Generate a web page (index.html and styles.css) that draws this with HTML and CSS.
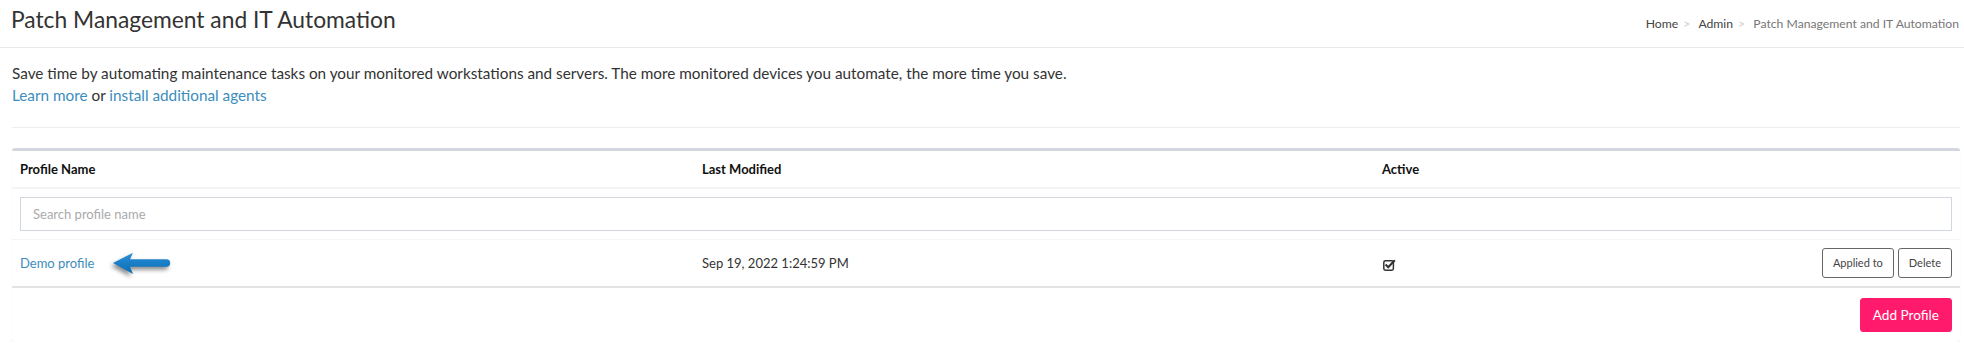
FILE: index.html
```html
<!DOCTYPE html>
<html lang="en">
<head>
<meta charset="utf-8">
<title>Patch Management and IT Automation</title>
<link rel="stylesheet" href="styles.css">
</head>
<body>
<header class="page-header">
  <h1 class="page-title">Patch Management and IT Automation</h1>
  <ol class="breadcrumb"><li class="crumb"><a href="#">Home</a></li><li class="crumb"><a href="#">Admin</a></li><li class="crumb crumb-active">Patch Management and IT Automation</li></ol>
</header>
<main class="content">
  <p class="intro">Save time by automating maintenance tasks on your monitored workstations and servers. The more monitored devices you automate, the more time you save.<br><a class="link" href="#">Learn more</a> or <a class="link" href="#">install additional agents</a></p>
  <hr class="divider">
  <section class="box">
    <table class="profiles">
      <colgroup>
        <col class="col-name">
        <col class="col-modified">
        <col class="col-active">
        <col class="col-actions">
      </colgroup>
      <thead>
        <tr>
          <th>Profile Name</th>
          <th>Last Modified</th>
          <th>Active</th>
          <th></th>
        </tr>
      </thead>
      <tbody>
        <tr>
          <td colspan="4"><input class="search" type="text" placeholder="Search profile name"></td>
        </tr>
        <tr class="data-row">
          <td><a class="link" href="#">Demo profile</a><svg class="pointer" width="64" height="30" viewBox="0 0 64 30" aria-hidden="true"><defs><linearGradient id="ag" x1="0" y1="0" x2="0" y2="1"><stop offset="0" stop-color="#2a8fd6"/><stop offset="1" stop-color="#0a6db5"/></linearGradient></defs><path d="M3 14 L23 3.7 L20 10.3 L56.5 10.3 A3.7 3.7 0 0 1 56.5 17.7 L20 17.7 L23 25 Z" fill="url(#ag)"/></svg></td>
          <td>Sep 19, 2022 1:24:59 PM</td>
          <td><svg class="check" width="13" height="12" viewBox="0 0 13 12" aria-hidden="true"><rect x="0.8" y="1.8" width="9.6" height="9.4" rx="1.6" fill="none" stroke="#333" stroke-width="1.5"/><path d="M2.6 5.6 L5.2 8.2 L11.8 1.2" fill="none" stroke="#333" stroke-width="2.1"/></svg></td>
          <td class="actions"><button class="btn btn-outline" type="button">Applied to</button><button class="btn btn-outline" type="button">Delete</button></td>
        </tr>
      </tbody>
    </table>
    <div class="box-footer">
      <button class="btn btn-primary" type="button">Add Profile</button>
    </div>
  </section>
</main>
</body>
</html>
```
FILE: styles.css
```css
* { box-sizing: border-box; }
html, body { margin: 0; padding: 0; background: #fff; }
body {
  font-family: "Lato", "Liberation Sans", sans-serif;
  font-size: 13px;
  color: #333;
}
a { text-decoration: none; }

.page-header {
  display: flex;
  align-items: baseline;
  justify-content: space-between;
  padding: 4px 5px 12px 11px;
  border-bottom: 1px solid #e9e9e9;
}
.page-title {
  margin: 0;
  font-size: 22.8px;
  line-height: 31px;
  font-weight: 400;
  color: #333;
}
.breadcrumb {
  display: block;
  margin: 0;
  padding: 0;
  list-style: none;
  font-size: 12.2px;
  line-height: 16px;
  white-space: nowrap;
}
.crumb { display: inline; }
.crumb a { color: #444; }
.crumb + .crumb::before {
  content: ">\00a0";
  padding: 0 5px;
  color: #ccc;
}
.crumb-active { color: #777; }

.content { padding: 0 4px 0 12px; }
.intro {
  margin: 14px 0 0;
  font-size: 15.3px;
  line-height: 22px;
  color: #333;
}
.link { color: #3c8dbc; }
.divider {
  margin: 21px 0 20px;
  border: 0;
  border-top: 1px solid #eee;
  height: 0;
}

.box {
  background: #fff;
  border-top: 3px solid #d2d6de;
  border-radius: 3px;
  box-shadow: 0 1px 1px rgba(0, 0, 0, 0.1);
}
.profiles {
  width: 100%;
  border-collapse: collapse;
  table-layout: fixed;
}
.col-name { width: 682px; }
.col-modified { width: 680px; }
.col-active { width: 300px; }
.profiles th,
.profiles td {
  padding: 8px;
  line-height: 20px;
  text-align: left;
  vertical-align: middle;
}
.profiles th {
  font-weight: 700;
  color: #111;
  border-bottom: 2px solid #f4f4f4;
}
.profiles td { border-top: 1px solid #f4f4f4; }
.data-row td { border-bottom: 2px solid #e3e3e3; }
.profiles .actions { text-align: right; white-space: nowrap; }

.search {
  display: block;
  width: 100%;
  height: 34px;
  padding: 6px 12px;
  border: 1px solid #d2d6de;
  border-radius: 0;
  font-family: inherit;
  font-size: 13px;
  color: #555;
}
.search::placeholder { color: #aaa; }

.pointer {
  display: inline-block;
  vertical-align: middle;
  margin: -6px 0 -6px 16px;
  filter: drop-shadow(-2px 3px 2px rgba(0, 0, 0, 0.45));
}
.check { display: inline-block; vertical-align: middle; margin-left: 1px; }

.btn {
  display: inline-block;
  font-family: inherit;
  border-radius: 3px;
  cursor: pointer;
}
.btn-outline {
  height: 30px;
  padding: 5px 10px;
  margin-left: 4px;
  font-size: 11px;
  line-height: 18px;
  color: #444;
  background: #fff;
  border: 1px solid #666;
}
.box-footer {
  display: flex;
  justify-content: flex-end;
  padding: 10px 8px;
}
.btn-primary {
  height: 34px;
  padding: 6px 12px;
  font-size: 13.6px;
  line-height: 20px;
  color: #fff;
  background: #ff1a6c;
  border: 1px solid #ff1a6c;
}
```
